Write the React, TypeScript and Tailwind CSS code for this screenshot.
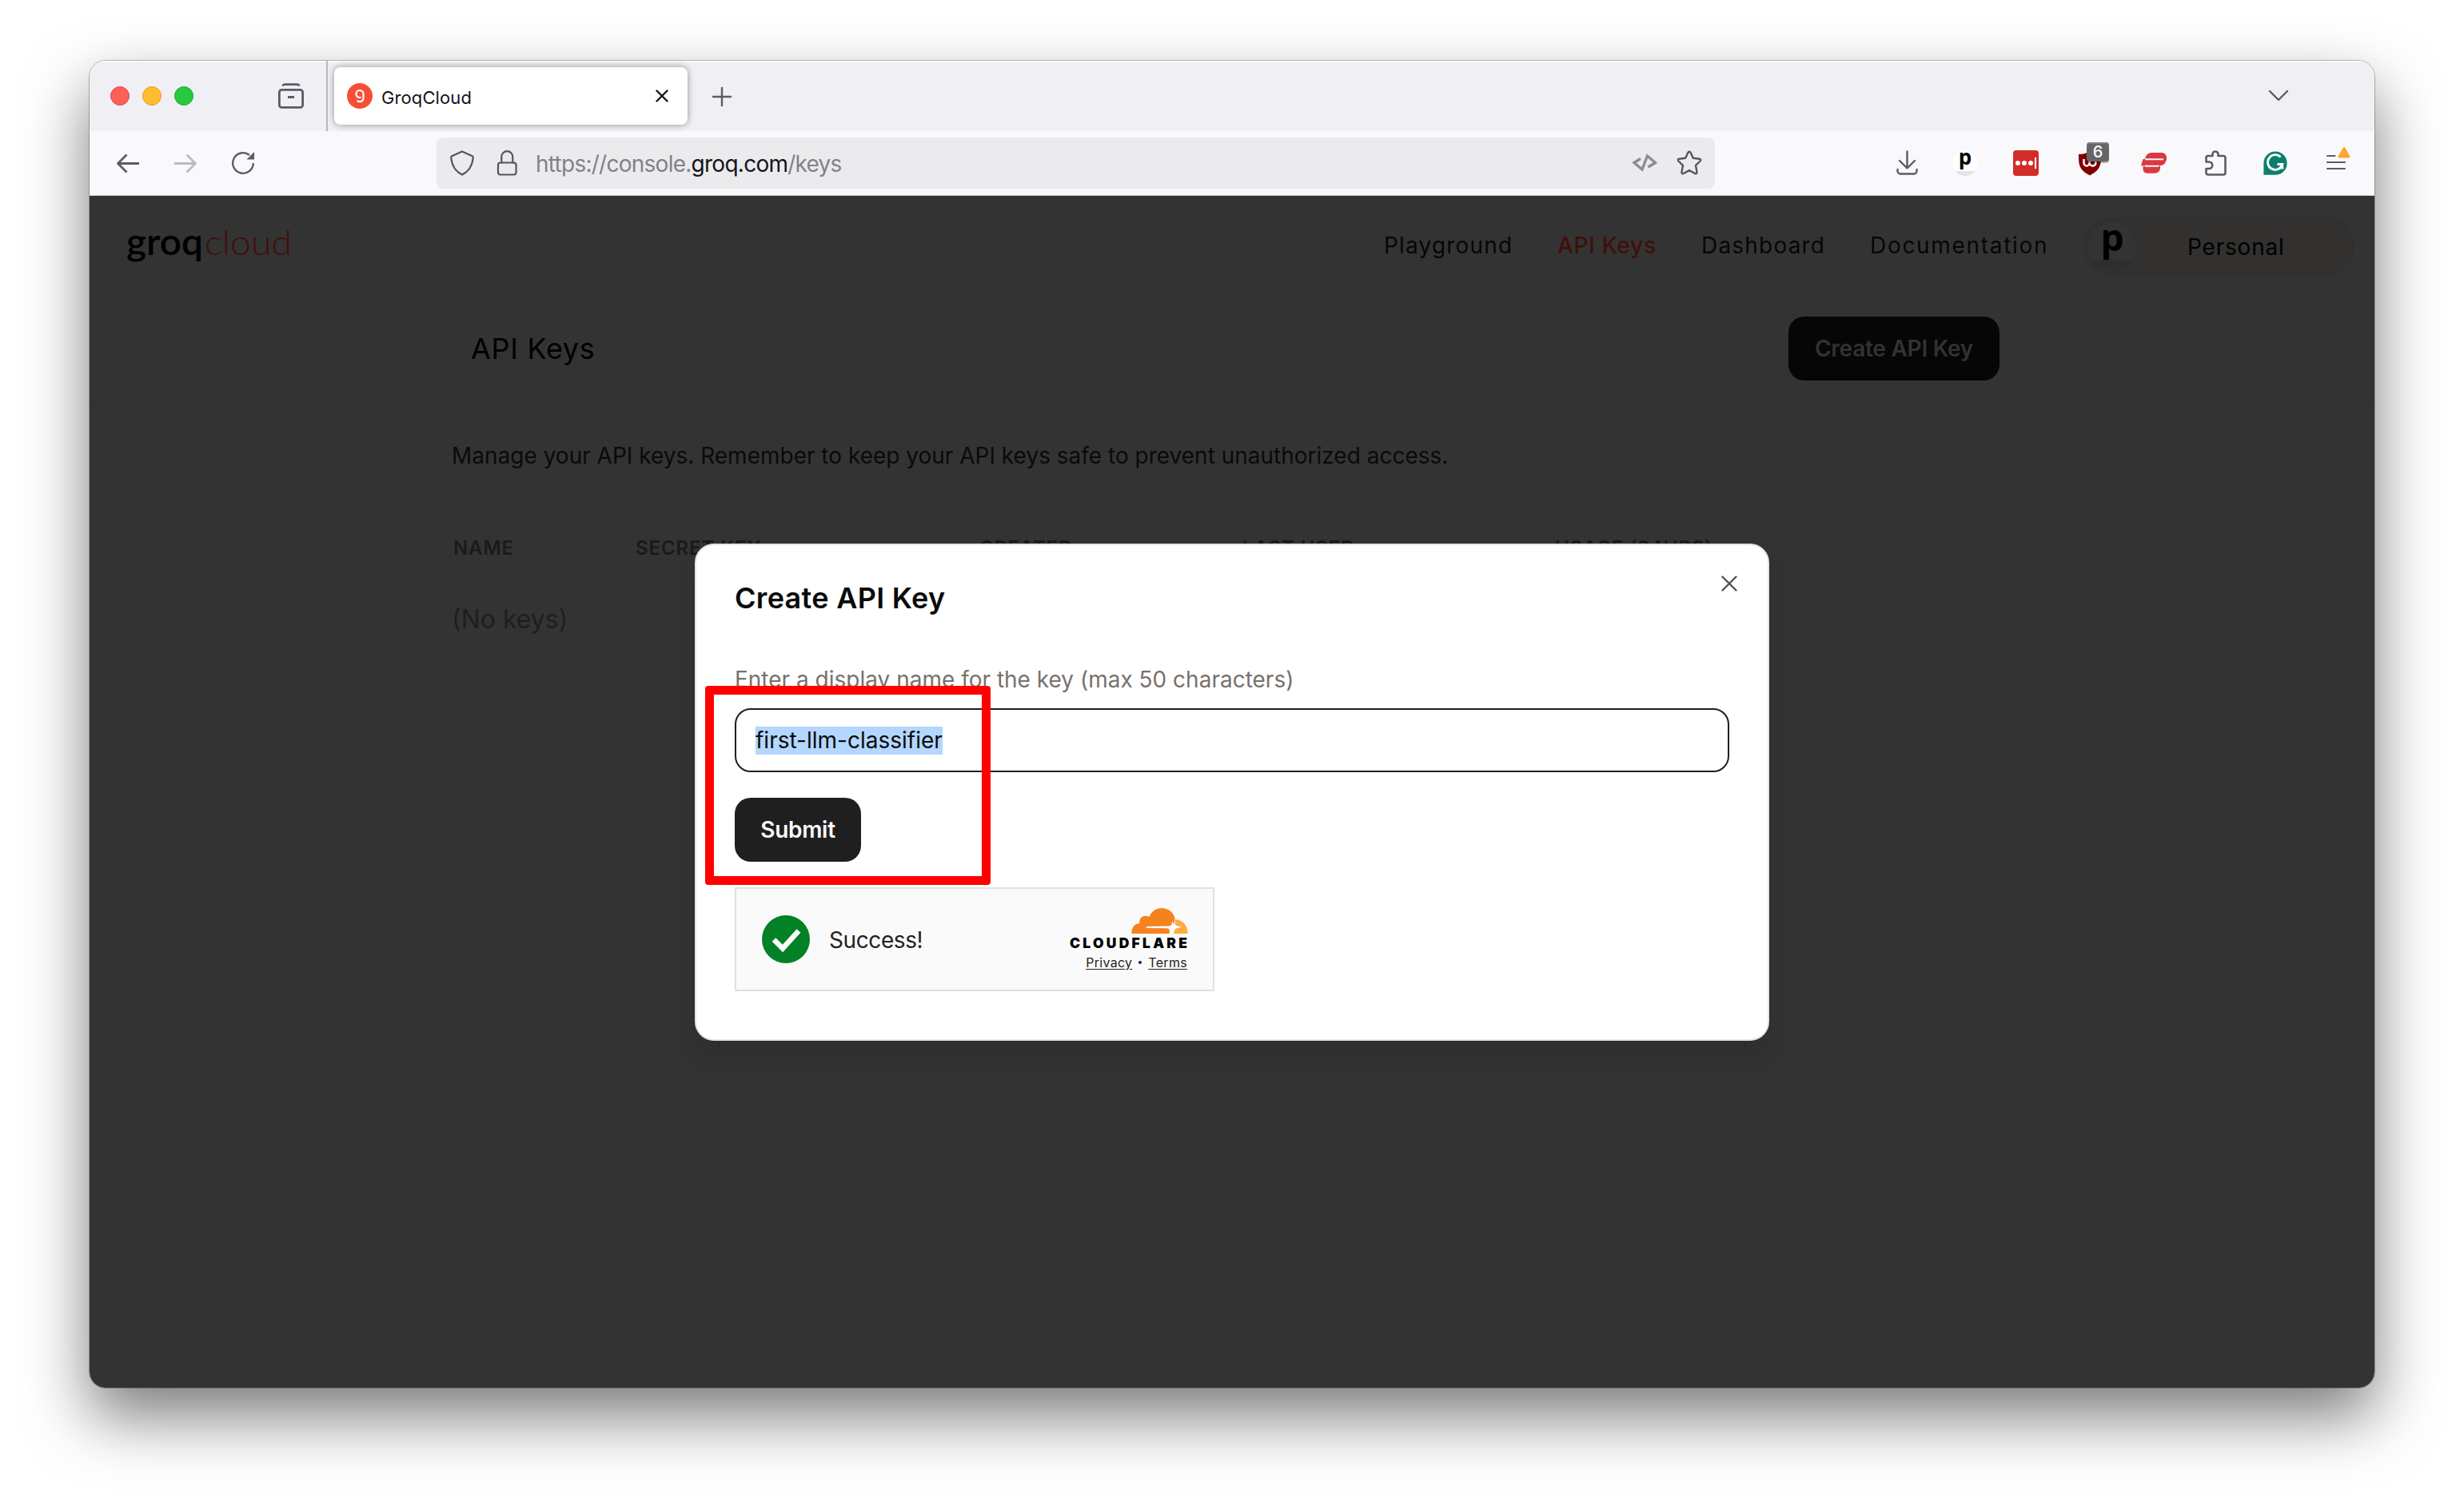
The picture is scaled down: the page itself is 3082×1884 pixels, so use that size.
import React from 'react';

const navItems = [
  { label: 'Playground', className: 'w-[217px] tracking-[1.2px] text-black/90' },
  { label: 'API Keys', className: 'w-[180px] tracking-[0.7px] font-medium text-[#3f100a]' },
  { label: 'Dashboard', className: 'w-[211px] tracking-[1.2px] text-black/90' },
  { label: 'Documentation', className: 'w-[267px] tracking-[1.7px] text-black/90' },
];

const columns = [
  { label: 'NAME', className: 'w-[228px]' },
  { label: 'SECRET KEY', className: 'w-[430px]' },
  { label: 'CREATED', className: 'w-[329px]' },
  { label: 'LAST USED', className: 'w-[391px]' },
  { label: 'USAGE (24HRS)', className: 'w-[300px]' },
];

const lineIcon = {
  width: 32,
  height: 32,
  viewBox: '0 0 32 32',
  fill: 'none',
  stroke: '#5b5b66',
  strokeWidth: 2.4,
  strokeLinecap: 'round' as const,
  strokeLinejoin: 'round' as const,
  className: 'shrink-0',
};

function TabStrip() {
  return (
    <div className="flex h-[88px] items-center bg-[#f0eff4] shadow-[inset_0_2px_0_#fbfbfc]">
      <div className="ml-[26px] flex gap-4">
        <span className="h-6 w-6 rounded-full border border-[#e2463f] bg-[#ff5f57]" />
        <span className="h-6 w-6 rounded-full border border-[#e1a116] bg-[#febc2e]" />
        <span className="h-6 w-6 rounded-full border border-[#14ae2e] bg-[#28c840]" />
      </div>
      <svg {...lineIcon} strokeWidth={2.8} className="ml-[106px] shrink-0">
        <path d="M5.5 3.5C6 2.2 6.8 1.6 8 1.6H24C25.200 1.6 26 2.200 26.500 3.500" strokeLinecap="butt" />
        <rect x="1.400" y="8.400" width="29.200" height="22" rx="3" />
        <path d="M12 17.500H20" strokeLinecap="butt" />
      </svg>
      <div className="ml-7 h-full w-0.5 bg-[#b8b8be]" />
      <div className="ml-2 flex h-[72px] w-[442px] items-center rounded-lg bg-white pl-4 shadow-[0_0_8px_rgba(0,0,0,0.4)]">
        <div className="flex h-8 w-8 items-center justify-center rounded-full bg-[#f55036]">
          <svg width="32" height="32" viewBox="0 0 32 32" fill="none" stroke="#fff" strokeWidth="2.200">
            <path d="M20.500 19V13.500A4.500 4.500 0 1 0 16 18H17.500M20.500 18.500A4.500 4.500 0 0 1 12.800 21.800" />
          </svg>
        </div>
        <span className="ml-[11px] w-[343px] pt-1 text-[22px] tracking-[0.1px] text-[#15141a]">GroqCloud</span>
        <svg width="16" height="16" viewBox="0 0 16 16" stroke="#15141a" strokeWidth="2.400" strokeLinecap="round">
          <path d="M1.500 1.500L14.500 14.500M14.500 1.500L1.500 14.500" />
        </svg>
      </div>
      <svg {...lineIcon} className="ml-[27px] shrink-0">
        <path d="M5 17H27M16 6V28" />
      </svg>
      <svg {...lineIcon} className="ml-auto mr-[104px] shrink-0">
        <path d="M5 10L16 21L27 10" />
      </svg>
    </div>
  );
}

function Toolbar() {
  return (
    <div className="flex h-[81px] items-center border-b border-[#cccccf] bg-[#f9f9fb]">
      <svg {...lineIcon} strokeWidth={2.8} className="ml-8 shrink-0" strokeLinecap="butt">
        <path d="M30 16.500H3.500M14.500 5.500L3.500 16.500L14.500 27.500" />
      </svg>
      <svg {...lineIcon} strokeWidth={2.8} stroke="#bbbbc0" className="ml-10 shrink-0" strokeLinecap="butt">
        <path d="M2 16.500H28.500M17.500 5.500L28.500 16.500L17.500 27.500" />
      </svg>
      <svg {...lineIcon} className="ml-10 shrink-0" strokeLinecap="butt">
        <path d="M28.800 16A12.800 12.800 0 1 1 24 6" />
        <path d="M30 2V11.500H20.500Z" fill="#5b5b66" stroke="none" />
      </svg>

      <div className="ml-[226px] flex h-16 w-[1599px] items-center rounded-lg bg-[#ebebed] pl-4">
        <svg {...lineIcon} stroke="#55555c" strokeWidth={2.2}>
          <path d="M16 1.400L28.800 7.200C29.600 7.600 29.900 8.200 29.800 9C28.800 19 24.500 26.500 16 30.600C7.500 26.500 3.200 19 2.200 9C2.100 8.200 2.400 7.600 3.200 7.200Z" />
        </svg>
        <svg {...lineIcon} stroke="#55555c" strokeWidth={2.2} className="ml-6 shrink-0">
          <rect x="5" y="15.500" width="22.600" height="15" rx="3" />
          <path d="M9.300 15.500V8A7 6.800 0 0 1 23.300 8V15.500" />
        </svg>
        <span className="ml-5 pt-0.5 text-[28px] tracking-[-0.74px] text-[#828287]">
          https://console.<span className="text-[#15141a]">groq.com</span>/keys
        </span>
        <svg width="32" height="32" viewBox="0 0 32 32" fill="none" stroke="#8d8d90" strokeWidth="3.400" className="ml-auto">
          <path d="M11 10.500L3 15.500L13 24L19.500 7L29.500 15.500L20.500 21" />
        </svg>
        <svg {...lineIcon} stroke="#55555c" className="ml-6 mr-4 shrink-0">
          <path d="M14.600 2.600C15.200 1.400 16.800 1.400 17.400 2.600L20.800 9.800L28.600 10.700C30.200 10.900 30.700 12.400 29.600 13.500L24 18.800L25.500 27.200C25.700 28.800 24.500 29.800 23.100 29L16 25.100L8.900 29C7.500 29.800 6.300 28.800 6.500 27.200L8 18.800L2.400 13.500C1.300 12.400 1.800 10.900 3.400 10.700L11.200 9.800Z" />
        </svg>
      </div>

      <svg {...lineIcon} className="ml-auto shrink-0">
        <path d="M15.500 1.500V21M6 13L15.500 22.500L25 13M3.500 24V26A3.500 3.500 0 0 0 7 29.500H24A3.500 3.500 0 0 0 27.500 26V24" />
      </svg>
      <div className="ml-10 flex h-8 w-8 shrink-0 items-center justify-center rounded-full bg-[linear-gradient(#fff_80%,#e4e4e5_80%)]">
        <span className="-mt-4 font-['Open_Sans'] text-[26px] font-bold leading-8 text-black">p</span>
      </div>
      <div className="ml-11 flex h-8 w-8 shrink-0 items-center gap-0.5 rounded-[4px] bg-[#d32d27] pl-[3px]">
        <span className="h-1.5 w-1.5 rounded-full bg-white" />
        <span className="h-1.5 w-1.5 rounded-full bg-white" />
        <span className="h-1.5 w-1.5 rounded-full bg-white" />
        <span className="h-3.5 w-0.5 bg-white" />
      </div>
      <div className="relative ml-12 h-8 w-8 shrink-0">
        <svg width="32" height="32" viewBox="0 0 32 32">
          <path d="M2 5C8 5 12 3.500 16 1C20 3.500 24 5 30 5C30 18 30 24 16 31.500C2 24 2 18 2 5Z" fill="#800000" />
          <path
            d="M8.500 11V16A3.500 3.500 0 0 0 15.500 16V11M15.500 15A4 4 0 1 0 19.500 11.500"
            fill="none"
            stroke="#fff"
            strokeWidth="2.400"
          />
        </svg>
        <span className="absolute -top-[10px] left-3 flex h-6 w-7 items-center justify-center rounded-[4px] bg-[#666] text-[20px] font-medium leading-none text-white shadow-[inset_0_2px_0_#808080,0_2px_0_rgba(0,0,0,0.3)]">
          6
        </span>
      </div>
      <svg width="32" height="32" viewBox="0 0 32 32" fill="#da3940" className="ml-12 shrink-0">
        <path d="M14 3H25C29.500 3 32 5.500 32 9.500C32 15 28.500 19.300 23.500 19.300H0L2.500 11C4.500 11 5 10.500 5.500 9C7 5 9.500 3 14 3Z" />
        <path d="M2.500 20H24C24.500 25.500 21.500 28.700 17.500 28.700H8C4.500 28.700 2.300 26.500 2.500 23Z" />
        <path d="M5 11.200H28M5 19.800H22" stroke="#f9f9fb" strokeWidth="2" />
      </svg>
      <svg {...lineIcon} strokeWidth={2.6} className="ml-[46px] shrink-0">
        <path d="M3.500 11.500V9.200C3.500 7.800 4.500 7 5.800 7H11.500V5A3.500 3.500 0 0 1 18.500 5V7H25C26.500 7 27.500 8 27.500 9.500V28C27.500 29.500 26.500 30.500 25 30.500H6C4.500 30.500 3.500 29.500 3.500 28V23H7A4 4 0 0 0 7 14.500H3.500Z" />
      </svg>
      <svg width="32" height="32" viewBox="0 0 32 32" className="ml-[42px] shrink-0">
        <path d="M16 1.500A14.600 14.600 0 1 1 16 30.800H1.400V16A14.600 14.600 0 0 1 16 1.500Z" fill="#0a7f6c" />
        <path d="M22.500 8.500A9.300 9.300 0 1 0 24.800 17.500H18.500M24.800 16V23.500" fill="none" stroke="#fff" strokeWidth="2.800" />
      </svg>
      <svg {...lineIcon} strokeWidth={2.2} className="ml-11 mr-8 shrink-0 overflow-visible">
        <path d="M5 7H14.500M5 15H27M5 23H27" />
        <path d="M26 -2.500L32 8H20Z" fill="#ffa436" stroke="#ffa436" strokeWidth="3" />
      </svg>
    </div>
  );
}

function Page() {
  return (
    <div className="flex-1 bg-[#333]">
      <header className="flex h-[127px] items-center border-b border-[#303030]">
        <svg width="220" height="70" viewBox="0 0 220 70" className="ml-10">
          <text x="6" y="46" textLength="96" lengthAdjust="spacingAndGlyphs" fontFamily="Lato" fontSize="46" fontWeight="600" fill="#000">
            groq
          </text>
          <text x="104" y="46" textLength="109" lengthAdjust="spacingAndGlyphs" fontFamily="Lato" fontSize="43" fontWeight="300" fill="#3f100a">
            cloud
          </text>
        </svg>
        <nav className="ml-auto flex pb-0.5 text-[28px]">
          {navItems.map((item) => (
            <span key={item.label} className={`whitespace-nowrap ${item.className}`}>
              {item.label}
            </span>
          ))}
        </nav>
        <div className="mr-[25px] flex h-[72px] w-[339px] items-center rounded-full border-2 border-[#303030] bg-[#32312f] pl-0.5">
          <div className="flex h-16 w-16 shrink-0 items-center justify-center rounded-full border-2 border-[#303030] bg-[linear-gradient(#333_78%,#2e2e2e_78%)]">
            <span className="-mt-6 font-['Open_Sans'] text-[46px] font-bold leading-[60px] text-black">p</span>
          </div>
          <span className="ml-[62px] pt-0.5 text-[28px] tracking-[0.8px] text-black">Personal</span>
        </div>
      </header>

      <div className="flex h-[130px] items-center justify-between border-b-2 border-[#303030] pl-[477px] pr-[469px]">
        <h1 className="text-[36px] tracking-[0.7px] text-black">API Keys</h1>
        <button className="h-20 w-[264px] rounded-[20px] bg-[#060606] text-[28px] font-semibold tracking-[-0.25px] text-[#323232]">
          Create API Key
        </button>
      </div>

      <main className="px-[453px] pt-12">
        <p className="text-[28px] leading-[40px] text-[#0a0a0a]">
          Manage your API keys. Remember to keep your API keys safe to prevent unauthorized access.
        </p>
        <div className="mt-20 flex pl-0.5 text-[24px] font-semibold leading-8 tracking-[0.9px] text-[#191a1d]">
          {columns.map((column) => (
            <span key={column.label} className={`shrink-0 ${column.className}`}>
              {column.label}
            </span>
          ))}
        </div>
        <p className="mt-[49px] text-[32px] leading-[48px] text-[#1f1e1d]">(No keys)</p>
      </main>
    </div>
  );
}

function Turnstile() {
  return (
    <div className="mt-8 flex h-[130px] w-[600px] items-center border-2 border-[#e0e0e0] bg-[#fafafa] pl-8 pr-8">
      <svg width="60" height="60" viewBox="0 0 60 60">
        <circle cx="30" cy="30" r="30" fill="#038127" />
        <path d="M15 30.500L26 41.500L46 19.500" fill="none" stroke="#fff" strokeWidth="6.500" />
      </svg>
      <span className="ml-6 pt-0.5 text-[28px] tracking-[-0.4px] text-[#232323]">Success!</span>
      <div className="-mr-px ml-auto flex flex-col items-end">
        <svg width="148" height="52" viewBox="0 0 148 52" className="overflow-visible">
          <path d="M130 32C132 27 133 19 131.500 14.500C140 13.500 148 21 147.500 32Z" fill="#fbad41" />
          <path
            d="M77.500 32C77 24.500 81 19.500 87.500 19C86.500 11.500 93 7.500 99.500 11C103 3.500 108 0 115 0C124 0 131.500 6.500 131.500 14.500C130.500 19 130.500 25 125.500 32Z"
            fill="#f6821f"
          />
          <path d="M96 23L124 22.600C127 22 128 20.500 128.500 16C130 20.500 131 22.500 141 23.500C133 24.500 131.500 26 127 32H124.500C125.500 27 125 25.500 121 25.200L96 25Z" fill="#fff" />
          <text x="0" y="50" textLength="147" lengthAdjust="spacing" fontFamily="Inter" fontSize="17.500" fontWeight="900" fill="#000">
            CLOUDFLARE
          </text>
        </svg>
        <div className="mr-px mt-[5px] flex items-center gap-2 text-[16px] leading-[22px] tracking-[0.3px] text-[#232323]">
          <a className="underline underline-offset-2">Privacy</a>
          <span className="h-1 w-1 rounded-full bg-[#232323]" />
          <a className="underline underline-offset-2">Terms</a>
        </div>
      </div>
    </div>
  );
}

function CreateKeyModal() {
  return (
    <div className="absolute left-[757px] top-[604px] h-[622px] w-[1344px] rounded-[24px] border-2 border-[#e7e5e4] bg-white p-12 shadow-[0_20px_30px_rgba(0,0,0,0.1)]">
      <div className="flex justify-between">
        <h2 className="text-[36px] font-semibold leading-none tracking-[0.3px] text-[#0a0a0a]">Create API Key</h2>
        <svg
          width="20"
          height="20"
          viewBox="0 0 20 20"
          stroke="#525252"
          strokeWidth="2.400"
          strokeLinecap="round"
          className="-mr-[10px] -mt-[10px]"
        >
          <path d="M1.500 1.500L18.500 18.500M18.500 1.500L1.500 18.500" />
        </svg>
      </div>
      <label className="mt-16 block text-[28px] leading-[40px] text-[#78716c]">
        Enter a display name for the key (max 50 characters)
      </label>
      <div className="mt-4 flex h-20 items-center rounded-[20px] border-2 border-[#1f1f1f] pl-6 text-[28px] text-[#0a0a0a]">
        <span className="bg-[#b3d7ff] leading-[35px]">first-llm-classifier</span>
      </div>
      <button className="mt-8 h-20 w-[158px] rounded-[20px] bg-[#1f1f1f] text-[28px] font-semibold tracking-[-0.3px] text-[#fafafa]">
        Submit
      </button>
      <Turnstile />

      {/* Highlight around the name field and submit button */}
      <div className="absolute left-[11px] top-[176px] h-[249px] w-[357px] rounded-[4px] border-[11px] border-[#ff0000]" />
    </div>
  );
}

export default function App() {
  return (
    <div className="h-[1884px] w-[3082px] overflow-hidden bg-white pl-28 pt-[76px] font-['Inter',sans-serif]">
      <div className="relative h-[1660px] w-[2858px] rounded-[20px] shadow-[0_0_0_1px_rgba(0,0,0,0.25),0_36px_80px_rgba(0,0,0,0.52)]">
        <div className="flex h-full flex-col overflow-hidden rounded-[20px]">
          <TabStrip />
          <Toolbar />
          <Page />
        </div>
        <CreateKeyModal />
      </div>
    </div>
  );
}
